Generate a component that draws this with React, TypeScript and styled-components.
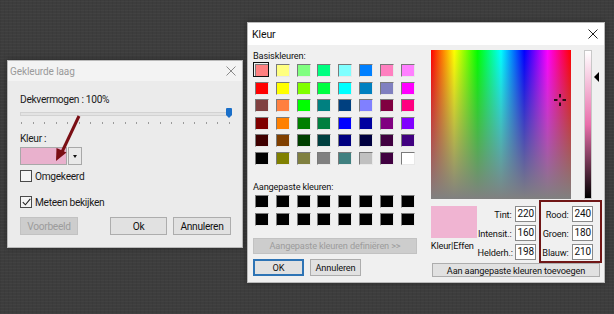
import React from 'react';
import styled, { createGlobalStyle } from 'styled-components';

const Global = createGlobalStyle`
  html, body { margin: 0; padding: 0; }
  body {
    width: 614px; height: 314px; overflow: hidden;
    background-color: #3d3d3d;
    background-image:
      repeating-linear-gradient(0deg, rgba(255,255,255,0.025) 0 1px, transparent 1px 3px),
      repeating-linear-gradient(90deg, rgba(0,0,0,0.05) 0 1px, transparent 1px 4px);
    font-family: Roboto, "Noto Sans", sans-serif;
  }
`;

const Desktop = styled.div`
  position: relative;
  width: 614px;
  height: 314px;
`;

const Win = styled.div<{ $l: number; $t: number; $w: number; $h: number; $bg: string }>`
  position: absolute;
  left: ${p => p.$l}px;
  top: ${p => p.$t}px;
  width: ${p => p.$w}px;
  height: ${p => p.$h}px;
  background: ${p => p.$bg};
  box-sizing: border-box;
  border: 1px solid #b9b9b9;
  display: flex;
  flex-direction: column;
  box-shadow: 0 0 6px rgba(0,0,0,0.35);
`;

const TitleBar = styled.div<{ $h: number; $bg: string; $color: string; $fs: number }>`
  height: ${p => p.$h}px;
  flex: none;
  background: ${p => p.$bg};
  color: ${p => p.$color};
  display: flex;
  align-items: center;
  justify-content: space-between;
  padding: 0 6px 0 2px;
  font-size: ${p => p.$fs}px;
  letter-spacing: -0.1px;
`;

const CloseX = ({ color }: { color: string }) => (
  <svg width="10" height="10" viewBox="0 0 10 10">
    <path d="M0.5 0.5 L9.5 9.5 M9.5 0.5 L0.5 9.5" stroke={color} strokeWidth="1" fill="none" />
  </svg>
);

/* ---------- left dialog ---------- */
const LeftBody = styled.div`
  position: relative;
  flex: 1;
  padding: 12px 10px 0 12px;
  display: flex;
  flex-direction: column;
  font-size: 10.2px;
  letter-spacing: -0.3px;
  color: #1a1a1a;
`;

const Label = styled.div<{ $mt?: number }>`
  line-height: 14px;
  margin-top: ${p => p.$mt ?? 0}px;
`;

const Slider = styled.div`
  position: relative;
  height: 17px;
  margin-top: 1px;
`;

const Track = styled.div`
  position: absolute;
  left: 0; right: 0; top: 4px;
  height: 2px;
  background: #e3e3e3;
  border: 1px solid #d2d2d2;
`;

const Thumb = styled.div`
  position: absolute;
  right: 0; top: 0;
  width: 6px; height: 7px;
  background: #1a6fc9;
  border-radius: 1px 1px 0 0;
  &::after {
    content: '';
    position: absolute;
    left: 0; top: 7px;
    border-left: 3px solid transparent;
    border-right: 3px solid transparent;
    border-top: 3px solid #1a6fc9;
  }
`;

const Ticks = styled.div`
  position: absolute;
  left: 1px; right: 2px; top: 14px;
  display: flex;
  justify-content: space-between;
`;

const Tick = styled.span`
  width: 1px; height: 2px;
  background: #9a9a9a;
`;

const ColorCombo = styled.div`
  display: flex;
  margin-top: 1px;
  height: 18px;
  width: 64px;
`;

const ComboSwatch = styled.div<{ $c: string }>`
  width: 47px;
  background: ${p => p.$c};
  border: 1px solid #a8a8a8;
  box-sizing: border-box;
`;

const ComboArrow = styled.div`
  width: 14px;
  margin-left: 1px;
  background: #e9e9e9;
  border: 1px solid #a8a8a8;
  box-sizing: border-box;
  display: flex;
  align-items: center;
  justify-content: center;
  &::after {
    content: '';
    border-left: 2.5px solid transparent;
    border-right: 2.5px solid transparent;
    border-top: 3px solid #111;
  }
`;

const CheckRow = styled.label<{ $mt: number }>`
  display: flex;
  align-items: center;
  gap: 3px;
  margin-top: ${p => p.$mt}px;
  height: 14px;
`;

const Box = styled.span`
  width: 10px; height: 10px;
  border: 1px solid #4a4a4a;
  background: #f4f4f4;
  display: flex;
  align-items: center;
  justify-content: center;
`;

const BtnRow = styled.div<{ $mt: number }>`
  display: flex;
  margin-top: ${p => p.$mt}px;
  gap: 6px;
`;

const Btn = styled.div<{ $w: number; $disabled?: boolean; $ml?: number; $focus?: boolean; $h?: number }>`
  width: ${p => p.$w}px;
  height: ${p => p.$h ?? 18}px;
  margin-left: ${p => p.$ml ?? 0}px;
  flex: none;
  box-sizing: border-box;
  border: 1px solid ${p => (p.$focus ? '#2e74b5' : p.$disabled ? '#c2c2c2' : '#adadad')};
  box-shadow: ${p => (p.$focus ? 'inset 0 0 0 1px #2e74b5' : 'none')};
  background: ${p => (p.$disabled ? '#cdcdcd' : '#e1e1e1')};
  color: ${p => (p.$disabled ? '#9c9c9c' : '#111')};
  display: flex;
  align-items: center;
  justify-content: center;
  white-space: nowrap;
`;

const ArrowOverlay = styled.svg`
  position: absolute;
  left: 0; top: 0;
  pointer-events: none;
`;

/* ---------- right dialog ---------- */
const RightBody = styled.div`
  flex: 1;
  display: flex;
  gap: 14px;
  padding: 4px 0 0 5px;
  font-size: 9.2px;
  letter-spacing: -0.15px;
  color: #111;
`;

const LeftCol = styled.div`
  width: 164px;
  display: flex;
  flex-direction: column;
`;

const SwatchGrid = styled.div<{ $rowH: number }>`
  display: grid;
  grid-template-columns: repeat(8, 20.8px);
  grid-auto-rows: ${p => p.$rowH}px;
`;

const Cell = styled.div<{ $sel?: boolean }>`
  position: relative;
  padding: 2px 0 0 2px;
  &::before {
    content: ${p => (p.$sel ? "''" : 'none')};
    position: absolute;
    left: 0; top: 0;
    width: 16px; height: 15px;
    border: 1px solid #111;
    box-sizing: border-box;
  }
`;

const Swatch = styled.div<{ $c: string }>`
  width: 14px; height: 13px;
  box-sizing: border-box;
  background: ${p => p.$c};
  border: 1px solid;
  border-color: #7a7a7a #e8e8e8 #e8e8e8 #7a7a7a;
`;

const SmallLabel = styled.div<{ $mt?: number }>`
  line-height: 13px;
  height: 13px;
  margin-top: ${p => p.$mt ?? 0}px;
  white-space: nowrap;
`;

const RightCol = styled.div`
  width: 171px;
  display: flex;
  flex-direction: column;
  padding-top: 1px;
`;

const TopArea = styled.div`
  display: flex;
`;

const Spectrum = styled.div`
  position: relative;
  width: 140px;
  height: 149px;
  background:
    linear-gradient(to bottom, rgba(128,128,128,0), rgb(128,128,128)),
    linear-gradient(to right, #ff0000 0%, #ffff00 16.6%, #00ff00 33.3%, #00ffff 50%, #0000ff 66.6%, #ff00ff 83.3%, #ff0000 100%);
`;

const Cross = styled.svg`
  position: absolute;
  left: 122px; top: 43px;
`;

const LumWrap = styled.div`
  position: relative;
  display: flex;
  margin-left: 13px;
`;

const LumBar = styled.div`
  width: 8px;
  height: 149px;
  box-sizing: border-box;
  border: 1px solid #c8c8c8;
  background: linear-gradient(to bottom, #ffffff 0%, #e96fab 50%, #000000 100%);
`;

const LumArrow = styled.div`
  position: absolute;
  left: 10px; top: 22px;
  border-top: 5px solid transparent;
  border-bottom: 5px solid transparent;
  border-right: 5px solid #000;
`;

const LowerArea = styled.div`
  display: flex;
  margin-top: 1px;
`;

const PreviewCol = styled.div`
  width: 47px;
  padding-top: 6px;
  display: flex;
  flex-direction: column;
  align-items: center;
`;

const Preview = styled.div<{ $c: string }>`
  width: 46px; height: 32px;
  align-self: flex-start;
  background: ${p => p.$c};
`;

const PreviewLabel = styled.div`
  margin-top: 1px;
  margin-left: -4px;
  line-height: 13px;
  white-space: nowrap;
`;

const FieldGrid = styled.div<{ $labelW: number }>`
  display: grid;
  grid-template-columns: ${p => p.$labelW}px 21px;
  column-gap: 3px;
  row-gap: 3px;
  align-items: center;
`;

const FieldLabel = styled.div`
  text-align: right;
  white-space: nowrap;
`;

const Input = styled.div`
  height: 16px;
  box-sizing: border-box;
  border: 1px solid #8a8a8a;
  background: #fff;
  padding-left: 2px;
  line-height: 14px;
  font-size: 10px;
`;

const HslGroup = styled.div`
  padding-top: 6px;
`;

const RgbGroup = styled.div`
  margin-left: 3px;
  width: 64px;
  height: 63px;
  box-sizing: border-box;
  border: 2px solid #701616;
  padding: 4px 0 0 0;
`;

const basic = [
  ['#FF8080', '#FFFF80', '#80FF80', '#00FF80', '#80FFFF', '#0080FF', '#FF80C0', '#FF80FF'],
  ['#FF0000', '#FFFF00', '#80FF00', '#00FF40', '#00FFFF', '#0080C0', '#8080C0', '#FF00FF'],
  ['#804040', '#FF8040', '#00FF00', '#008080', '#004080', '#8080FF', '#800040', '#FF0080'],
  ['#800000', '#FF8000', '#008000', '#008040', '#0000FF', '#0000A0', '#800080', '#8000FF'],
  ['#400000', '#804000', '#004000', '#004040', '#000080', '#000040', '#400040', '#400080'],
  ['#000000', '#808000', '#808040', '#808080', '#408080', '#C0C0C0', '#400040', '#FFFFFF'],
];

const Field = ({ label, value }: { label: string; value: string }) => (
  <>
    <FieldLabel>{label}</FieldLabel>
    <Input>{value}</Input>
  </>
);

export default function App() {
  return (
    <Desktop>
      <Global />
      <Win $l={7} $t={60} $w={236} $h={188} $bg="#ebebeb">
        <TitleBar $h={20} $bg="#f3f3f3" $color="#9a9a9a" $fs={10}>
          <span>Gekleurde laag</span>
          <CloseX color="#8a8a8a" />
        </TitleBar>
        <LeftBody>
          <Label>Dekvermogen : 100%</Label>
          <Slider>
            <Track />
            <Thumb />
            <Ticks>
              {Array.from({ length: 19 }).map((_, i) => <Tick key={i} />)}
            </Ticks>
          </Slider>
          <Label $mt={7}>Kleur :</Label>
          <ColorCombo>
            <ComboSwatch $c="#e9b1cd" />
            <ComboArrow />
          </ColorCombo>
          <CheckRow $mt={4}>
            <Box />
            <span>Omgekeerd</span>
          </CheckRow>
          <CheckRow $mt={12}>
            <Box>
              <svg width="9" height="8" viewBox="0 0 9 8">
                <path d="M0.8 4.2 L3.4 6.8 L8.3 0.8" stroke="#222" strokeWidth="1.1" fill="none" />
              </svg>
            </Box>
            <span>Meteen bekijken</span>
          </CheckRow>
          <BtnRow $mt={8}>
            <Btn $w={58} $disabled>Voorbeeld</Btn>
            <Btn $w={57} $ml={26}>Ok</Btn>
            <Btn $w={58}>Annuleren</Btn>
          </BtnRow>
          <ArrowOverlay width="236" height="168" viewBox="0 0 236 168">
            <line x1="71" y1="35" x2="54" y2="71" stroke="#7a0e14" strokeWidth="3" />
            <polygon points="48,80 58.5,71.5 48.5,67" fill="#7a0e14" />
          </ArrowOverlay>
        </LeftBody>
      </Win>

      <Win $l={247} $t={22} $w={358} $h={261} $bg="#f0f0f0">
        <TitleBar $h={22} $bg="#ffffff" $color="#111" $fs={10.5}>
          <span style={{ marginLeft: 2 }}>Kleur</span>
          <CloseX color="#222" />
        </TitleBar>
        <RightBody>
          <LeftCol>
            <SmallLabel>Basiskleuren:</SmallLabel>
            <SwatchGrid $rowH={17.6}>
              {basic.flat().map((c, i) => (
                <Cell key={i} $sel={i === 0}>
                  <Swatch $c={c} />
                </Cell>
              ))}
            </SwatchGrid>
            <SmallLabel $mt={12}>Aangepaste kleuren:</SmallLabel>
            <SwatchGrid $rowH={18}>
              {Array.from({ length: 16 }).map((_, i) => (
                <Cell key={i}>
                  <Swatch $c="#000" />
                </Cell>
              ))}
            </SwatchGrid>
            <Btn $w={164} $h={16} $disabled style={{ marginTop: 9 }}>
              Aangepaste kleuren definiëren &gt;&gt;
            </Btn>
            <BtnRow $mt={5}>
              <Btn $w={51} $h={17} $focus>OK</Btn>
              <Btn $w={51} $h={17}>Annuleren</Btn>
            </BtnRow>
          </LeftCol>
          <RightCol>
            <TopArea>
              <Spectrum>
                <Cross width="14" height="14" viewBox="0 0 14 14">
                  <path d="M1 7 H4.5 M9.5 7 H13 M7 1 V4.5 M7 9.5 V13" stroke="#2a0a14" strokeWidth="2" />
                </Cross>
              </Spectrum>
              <LumWrap>
                <LumBar />
                <LumArrow />
              </LumWrap>
            </TopArea>
            <LowerArea>
              <PreviewCol>
                <Preview $c="#f0b4d2" />
                <PreviewLabel>Kleur|Effen</PreviewLabel>
              </PreviewCol>
              <HslGroup>
                <FieldGrid $labelW={34}>
                  <Field label="Tint:" value="220" />
                  <Field label="Intensit.:" value="160" />
                  <Field label="Helderh.:" value="198" />
                </FieldGrid>
              </HslGroup>
              <RgbGroup>
                <FieldGrid $labelW={28}>
                  <Field label="Rood:" value="240" />
                  <Field label="Groen:" value="180" />
                  <Field label="Blauw:" value="210" />
                </FieldGrid>
              </RgbGroup>
            </LowerArea>
            <Btn $w={168} $h={14} style={{ marginLeft: 1 }}>Aan aangepaste kleuren toevoegen</Btn>
          </RightCol>
        </RightBody>
      </Win>
    </Desktop>
  );
}
